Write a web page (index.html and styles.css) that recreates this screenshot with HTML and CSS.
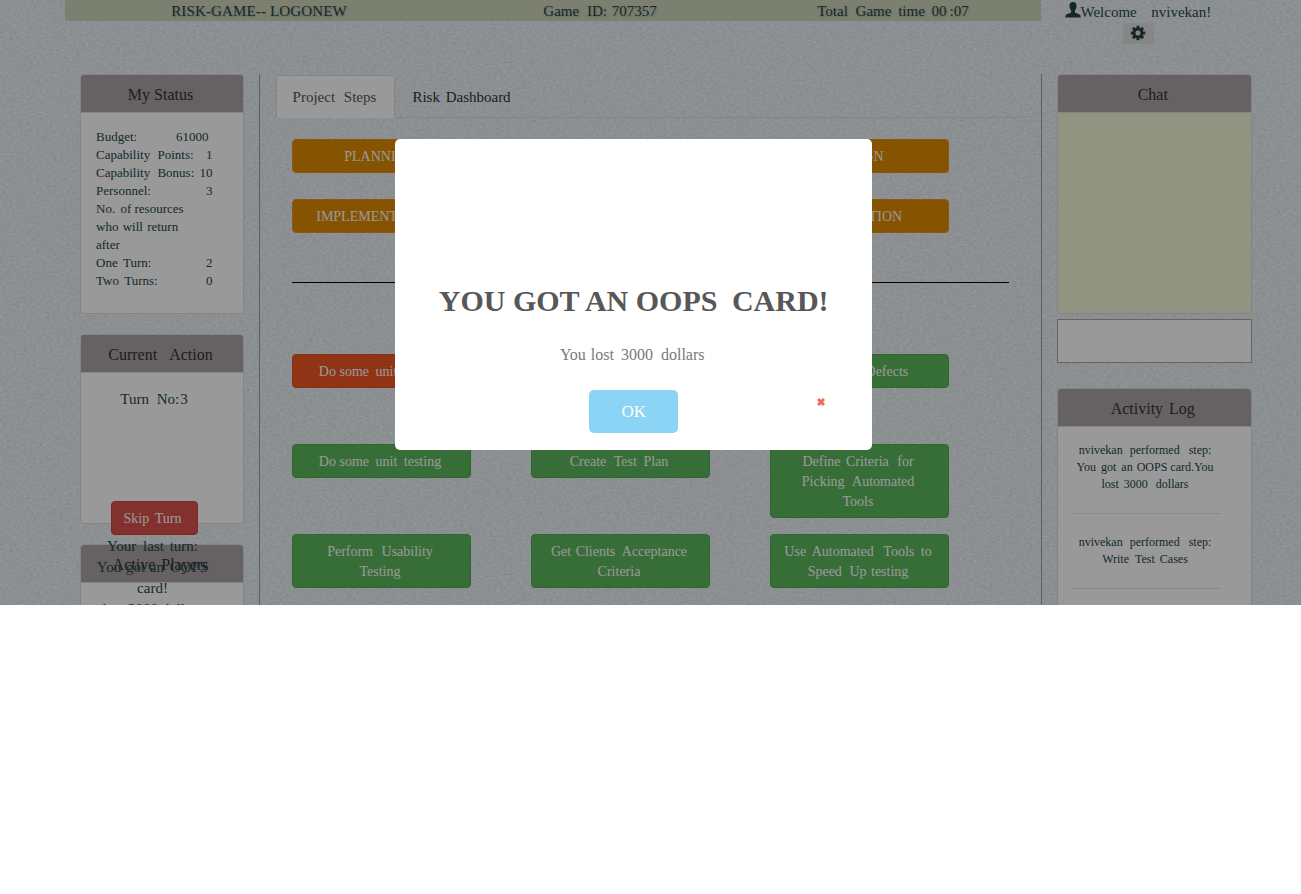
FILE: index.html
```html
<!DOCTYPE html>
<html lang="en">
<head>
<meta charset="utf-8">
<title>Risk Game</title>
<link rel="stylesheet" href="styles.css">
</head>
<body>
<div class="stage">
  <svg class="fabric" width="1301" height="605" aria-hidden="true">
    <filter id="weave" x="0" y="0" width="100%" height="100%" color-interpolation-filters="sRGB">
      <feTurbulence type="fractalNoise" baseFrequency="0.3 0.5" numOctaves="2" seed="4"/>
      <feColorMatrix type="matrix" values="0 0 0 0 0.1  0 0 0 0 0.13  0 0 0 0 0.16  0.13 0.1 0 0 -0.065"/>
    </filter>
    <rect width="1301" height="605" filter="url(#weave)"/>
  </svg>
  <header class="top">
    <div class="bar">
      <div class="logo">RISK-GAME-- LOGONEW</div>
      <div class="gid">Game <i class="g4"></i>ID: <i class="g1"></i>707357</div>
      <div class="time">Total <i class="g4"></i>Game <i class="g3"></i>time <i class="g3"></i>00<i class="g3"></i>:07</div>
    </div>
    <div class="user">
      <div class="welcome"><svg class="person" viewBox="0 0 16 16" width="16" height="16"><path d="M8 0C5.6 0 4.4 1.500 4.500 4C4.600 6 5.200 7.600 6.200 8.700V10.200C5.800 11.200 1.500 11.600.700 13.300C.400 14 .300 15 .300 15.500H15.700C15.700 15 15.600 14 15.300 13.300C14.500 11.600 10.200 11.200 9.800 10.200V8.700C10.800 7.600 11.400 6 11.500 4C11.600 1.500 10.400 0 8 0Z"/></svg><span>Welcome</span> <span class="name">nvivekan!</span></div>
      <div class="gear"><svg viewBox="-8 -8 16 16" width="16" height="16"><g><rect x="-1.500" y="-7.200" width="3" height="14.400"/><rect x="-1.500" y="-7.200" width="3" height="14.400" transform="rotate(45)"/><rect x="-1.500" y="-7.200" width="3" height="14.400" transform="rotate(90)"/><rect x="-1.500" y="-7.200" width="3" height="14.400" transform="rotate(135)"/><circle r="5.400"/></g><circle class="hole" r="2.500"/></svg></div>
    </div>
  </header>
  <div class="columns">
    <aside class="left">
      <section class="panel status">
        <h3>My Status</h3>
        <div class="body">
          <div class="row budget"><span>Budget:</span><span>61000</span></div>
          <div class="row"><span>Capability <i class="g4"></i>Points:</span><span>1</span></div>
          <div class="row"><span>Capability <i class="g4"></i>Bonus:</span><span>10</span></div>
          <div class="row"><span>Personnel:</span><span>3</span></div>
          <div class="row"><span>No. <i class="g2"></i>of resources<br>who <i class="g1"></i>will <i class="g1"></i>return<br>after</span></div>
          <div class="row"><span>One <i class="g2"></i>Turn:</span><span>2</span></div>
          <div class="row"><span>Two <i class="g2"></i>Turns:</span><span>0</span></div>
        </div>
      </section>
      <section class="panel action">
        <h3>Current <i class="g8"></i>Action</h3>
        <div class="turn">Turn <i class="g4"></i>No:<i class="g1"></i>3</div>
        <button class="skip">Skip <i class="g2"></i>Turn</button>
        <div class="last">Your <i class="g3"></i>last <i class="g2"></i>turn:<br>You <i class="g1"></i>got <i class="g1"></i>an <i class="g2"></i>OOPS<br>card!<br>lost 3000 dollars</div>
      </section>
      <section class="panel players"><h3>Active <i class="g2"></i>Players</h3></section>
    </aside>
    <main class="center">
      <nav class="tabs"><a class="tab on">Project <i class="g5"></i>Steps</a><a class="tab">Risk <i class="g2"></i>Dashboard</a></nav>
      <div class="phases">
        <button class="btn phase">PLANNING</button><button class="btn phase">REQUIREMENTS</button><button class="btn phase">DESIGN</button>
        <button class="btn phase wide">IMPLEMENTATION</button><button class="btn phase">TESTING</button><button class="btn phase wide">INTEGRATION</button>
      </div>
      <hr>
      <div class="steps">
        <button class="btn done">Do some <i class="g3"></i>unit <i class="g3"></i>testing</button><button class="btn">Write Test Cases</button><button class="btn">Find <i class="g4"></i>the <i class="g4"></i>Defects</button>
        <button class="btn">Do some <i class="g3"></i>unit <i class="g3"></i>testing</button><button class="btn">Create <i class="g4"></i>Test <i class="g3"></i>Plan</button><button class="btn">Define <i class="g2"></i>Criteria <i class="g5"></i>for<br>Picking <i class="g4"></i>Automated<br>Tools</button>
        <button class="btn">Perform <i class="g5"></i>Usability<br>Testing</button><button class="btn">Get <i class="g1"></i>Clients <i class="g3"></i>Acceptance<br>Criteria</button><button class="btn">Use <i class="g2"></i>Automated <i class="g6"></i>Tools <i class="g3"></i>to<br>Speed <i class="g4"></i>Up <i class="g1"></i>testing</button>
      </div>
    </main>
    <aside class="right">
      <section class="panel chat"><h3>Chat</h3></section>
      <div class="entry"></div>
      <section class="panel log">
        <h3>Activity <i class="g2"></i>Log</h3>
        <div class="item">nvivekan <i class="g4"></i>performed <i class="g6"></i>step:<br>You <i class="g2"></i>got <i class="g2"></i>an <i class="g1"></i>OOPS card.You<br>lost <i class="g2"></i>3000 <i class="g5"></i>dollars</div>
        <div class="item two">nvivekan <i class="g4"></i>performed <i class="g6"></i>step:<br>Write <i class="g3"></i>Test <i class="g2"></i>Cases</div>
      </section>
    </aside>
  </div>
  <div class="shade"></div>
  <div class="modal">
    <h2>YOU GOT AN OOPS <i class="g7"></i>CARD!</h2>
    <p>You <i class="g1"></i>lost <i class="g3"></i>3000 <i class="g4"></i>dollars</p>
    <button class="ok">OK</button>
    <svg class="cross" width="8" height="8" viewBox="0 0 8 8"><path d="M1 1L7 7M7 1L1 7"/></svg>
  </div>
</div>
</body>
</html>
```
FILE: styles.css
```css
* { box-sizing: border-box; }
body { margin: 0; background: #fff; font-family: "Liberation Serif", serif; color: #25464a; }
button { font: inherit; margin: 0; }
/* extra word gaps */
.g1 { padding-left: 1px; }
.g2 { padding-left: 2px; }
.g3 { padding-left: 3px; }
.g4 { padding-left: 4px; }
.g5 { padding-left: 5px; }
.g6 { padding-left: 6px; }
.g7 { padding-left: 7px; }
.g8 { padding-left: 8px; }
.stage { position: relative; width: 1301px; height: 605px; overflow: hidden; background: #f5faff; }
.fabric { position: absolute; left: 0; top: 0; }
.top { position: relative; display: flex; height: 74px; padding-left: 65px; font-size: 15px; }
.bar { width: 976px; height: 21px; display: flex; background: #cfd6bb; line-height: 22px; white-space: nowrap; text-shadow: 1px 1px 2px #9daa94; }
.logo { width: 390px; text-align: center; letter-spacing: .15px; padding-right: 1px; border-right: 1px solid #c9d0b8; }
.gid { width: 290px; text-align: center; }
.time { width: 296px; text-align: center; }
.user { width: 194px; }
.welcome { height: 23px; padding-left: 23.500px; line-height: 24px; white-space: nowrap; display: flex; }
.person { margin-top: 2px; }
.person, .gear svg { fill: #234248; }
.name { margin-left: 14.500px; }
.gear { width: 31px; height: 21px; margin-left: 82px; background: #e0e0de; display: flex; justify-content: center; padding: 2px 1px 0 0; }
.gear .hole { fill: #e0e0de; }
.columns { position: relative; display: flex; height: 531px; }
.left { width: 260px; padding: 0 15px 0 80px; border-right: 1px solid #999ea2; }
.center { width: 782px; padding: 1px 14px 0 16px; border-right: 1px solid #999ea2; }
.right { width: 209.500px; padding-left: 15px; }
.panel { background: #fff; border: 1px solid #ddd; border-radius: 4px; height: 240px; margin-bottom: 20px; }
.panel h3 { margin: 0; height: 38px; padding-right: 3px; background: #aaa2a4; border-bottom: 1px solid #ddd; border-radius: 3px 3px 0 0; font-weight: 400; font-size: 16px; line-height: 40px; text-align: center; color: #333; white-space: nowrap; }
.body { padding: 15px 0 0 15px; width: 131.500px; font-size: 13px; line-height: 18px; }
.row { display: flex; justify-content: space-between; white-space: nowrap; }
.budget { padding-right: 4px; }
.action { height: 190px; text-align: center; }
.turn { font-size: 15px; line-height: 20px; padding: 16px 16px 0 0; height: 128px; }
.skip { display: block; width: 87px; height: 34px; margin-left: 29.500px; border: 1px solid #d43f3a; border-radius: 4px; background: #d9534f; color: #fff; font-size: 14px; padding: 2px 3px 0 0; }
.last { position: relative; z-index: 2; font-size: 15px; line-height: 21px; padding-top: 1px; width: 143px; white-space: nowrap; }
.tabs { display: flex; height: 43px; border-bottom: 1px solid #ddd; font-size: 15px; }
.tab { width: 119px; height: 43px; padding-right: 2px; text-align: center; line-height: 43px; border: 1px solid transparent; border-radius: 4px 4px 0 0; color: #333; margin-right: 8px; white-space: nowrap; }
.tab.on { background: #fff; border-color: #ddd; border-bottom-color: #fff; color: #555; }
.phases { display: grid; grid-template-columns: repeat(3, 179px); gap: 26px 60px; padding: 21px 0 0 16px; }
.btn { min-height: 34px; padding: 7px 3px 5px 0; border: 1px solid #4cae4c; border-radius: 4px; background: #5cb85c; color: #fff; font-size: 14px; line-height: 20px; white-space: nowrap; }
.btn.phase { background: #df8a00; border-color: #eb9316; height: 34px; }
.btn.wide { padding-right: 8px; }
.btn.done { background: #f05724; border-color: #e84d18; }
.center hr { width: 717px; height: 1px; margin: 49px 0 0 16px; border: 0; background: #000; }
.steps { display: grid; grid-template-columns: repeat(3, 179px); grid-template-rows: 90px 90px 54px; column-gap: 60px; align-items: start; padding: 71px 0 0 16px; }
.chat { background: #f4f7d9; margin-bottom: 5px; }
.entry { height: 44px; background: #fff; border: 1px solid #a5a7ac; margin-bottom: 25px; }
.log { height: 320px; }
.item { width: 149px; height: 87px; margin-left: 14px; border-bottom: 1px solid #e6e6e6; font-size: 12px; line-height: 17px; padding: 15px 3px 0 0; text-align: center; white-space: nowrap; }
.item.two { height: 75px; padding-top: 20px; }
.shade { position: absolute; inset: 0; z-index: 5; background: rgba(0,0,0,.4); }
.modal { position: absolute; z-index: 6; left: 395px; top: 139px; width: 477.400px; height: 311.400px; border-radius: 5px; background: #fff; padding-top: 142px; text-align: center; white-space: nowrap; }
.modal h2 { margin: 0; height: 40px; font-size: 30px; line-height: 40px; color: #575757; }
.modal p { margin: 24px 3px 0 0; font-size: 16px; line-height: 20px; color: #797979; }
.ok { display: block; width: 89px; height: 43.400px; margin: 25px auto 0; padding: 0; border: 0; border-radius: 5px; background: #8cd4f5; color: #fff; font-size: 17px; }
.cross { position: absolute; left: 421.500px; top: 259px; fill: none; stroke: #f06b58; stroke-width: 3; }
```
